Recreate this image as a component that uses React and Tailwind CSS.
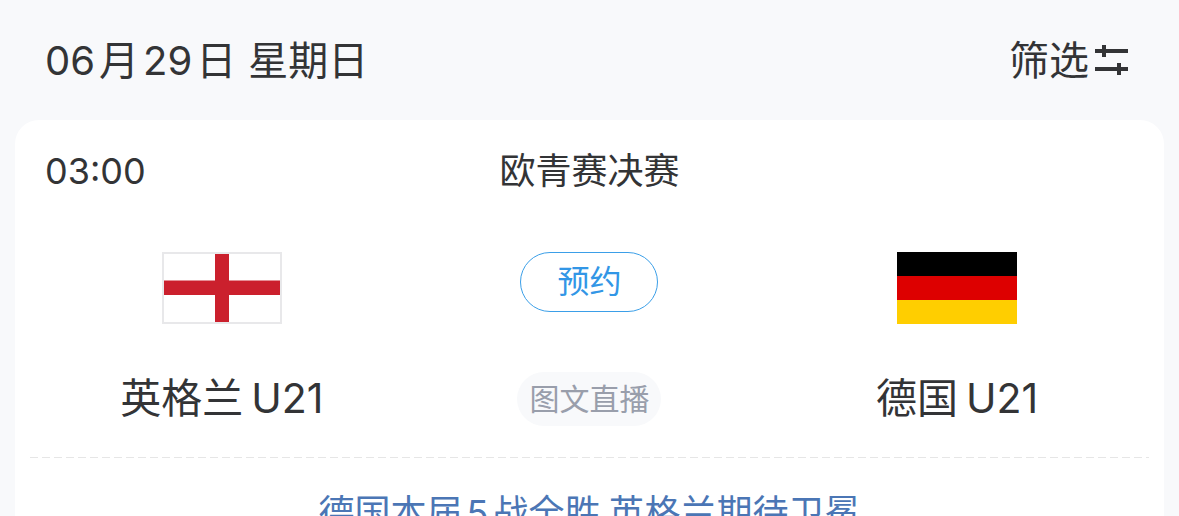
import React from 'react';

const match = {
  time: '03:00',
  league: '欧青赛决赛',
  home: { name: '英格兰', suffix: 'U21' },
  away: { name: '德国', suffix: 'U21' },
};

const EnglandFlag = () => (
  <svg viewBox="0 0 120 72" className="w-[120px] h-[72px]" role="img" aria-label="英格兰">
    <rect x="1" y="1" width="118" height="70" fill="#fff" stroke="#e8e8ea" strokeWidth="2" />
    <path d="M53 2h14v68H53z M2 28.500h116v14.500H2z" fill="#cb202d" />
  </svg>
);

const GermanyFlag = () => (
  <svg viewBox="0 0 120 72" className="w-[120px] h-[72px]" role="img" aria-label="德国">
    <rect width="120" height="24" fill="#000" />
    <rect y="24" width="120" height="24" fill="#dd0000" />
    <rect y="48" width="120" height="24" fill="#ffce00" />
  </svg>
);

const FilterIcon = () => (
  <svg viewBox="0 0 34 34" className="w-[34px] h-[34px]" fill="#333436" aria-hidden="true">
    <path d="M0 5h33v4H0z M7 1h4v12H7z" />
    <path d="M0 23h33v4H0z M22 19h4v12h-4z" />
  </svg>
);

const Team = ({ team, flag }) => (
  <div className="flex flex-col items-center">
    {flag}
    <div className="mt-11 flex gap-2 text-[41px] leading-[60px]">
      <span>{team.name}</span>
      <span>{team.suffix}</span>
    </div>
  </div>
);

const App = () => {
  return (
    <main className="h-screen overflow-hidden bg-[#f8f9fb] text-[#333436] font-['Inter','Noto_Sans_CJK_SC',sans-serif]">
      <header className="flex items-center justify-between pt-[2px] pl-[45px] pr-[50px] h-[120px] text-[40px] leading-[60px]">
        <h1 className="flex gap-3">
          <span className="flex gap-1">
            <span>06</span>
            <span>月</span>
            <span>29</span>
            <span>日</span>
          </span>
          <span>星期日</span>
        </h1>
        <button type="button" className="flex items-center gap-[6px]">
          筛选
          <FilterIcon />
        </button>
      </header>

      <section className="mx-[15px] rounded-t-3xl bg-white pt-6">
        <div className="grid grid-cols-3 items-center px-[30px] text-[36px] leading-[54px]">
          <time>{match.time}</time>
          <h2 className="text-center">{match.league}</h2>
        </div>

        <div className="mt-[54px] grid grid-cols-3 px-[23px]">
          <Team team={match.home} flag={<EnglandFlag />} />
          <div className="flex flex-col items-center">
            <button
              type="button"
              className="w-[138px] h-[60px] rounded-full border border-[#3b9fe8] text-[32px] leading-[48px] text-[#3296e6]"
            >
              预约
            </button>
            <a
              href="#live"
              className="mt-[60px] flex items-center justify-center w-36 h-[54px] rounded-full bg-[#f8f9fb] text-[30px] leading-[44px] text-[#999eab]"
            >
              图文直播
            </a>
          </div>
          <Team team={match.away} flag={<GermanyFlag />} />
        </div>

        <div className="mx-[15px] mt-[29px] h-px bg-[repeating-linear-gradient(90deg,#e6e6e6_0_8px,transparent_8px_12px)]" />

        <a
          href="#preview"
          className="flex justify-center gap-2 pt-7 pb-8 text-[36px] leading-[54px] text-[#4b76b5]"
        >
          <span className="flex gap-1">
            <span>德国本届</span>
            <span>5</span>
            <span>战全胜</span>
          </span>
          <span>英格兰期待卫冕</span>
        </a>
      </section>
    </main>
  );
};

export default App;
